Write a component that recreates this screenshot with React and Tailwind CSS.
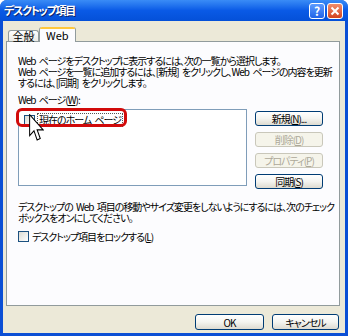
import React from 'react';

function XpButton({ children, disabled, className = '' }) {
    return (
        <div
            className={`flex items-center justify-center rounded-[3px] border ${
                disabled
                    ? 'border-[#c9c7ba] bg-[#f5f4ea] text-[#aca899]'
                    : 'border-[#003c74] bg-gradient-to-b from-[#ffffff] via-[#f4f4f0] to-[#dedbd0] text-black'
            } ${className}`}
        >
            {children}
        </div>
    );
}

function Checkbox() {
    return (
        <div className="h-[11px] w-[11px] shrink-0 border border-[#1c5180] bg-gradient-to-br from-[#dcdcd4] to-[#ffffff]" />
    );
}

export default function App() {
    return (
        <div
            className="flex h-[336px] w-[348px] flex-col overflow-hidden rounded-t-[7px] bg-[#0b4fd5] text-[10px] leading-[11px] tracking-[-1px] text-black [word-spacing:2px]"
            style={{ fontFamily: '"Noto Sans CJK JP", "Liberation Sans", sans-serif', fontFeatureSettings: '"palt"' }}
        >
            {/* title bar */}
            <div className="flex h-[21px] shrink-0 items-center bg-gradient-to-b from-[#3a8cf6] via-[#0a5ae6] to-[#0450d8] pl-[4px] pr-[5px]">
                <span className="text-[11px] font-bold tracking-[-1.3px] text-white [text-shadow:1px_1px_0_#0a246a]">
                    デスクトップ項目
                </span>
                <div className="ml-auto flex gap-[2px] tracking-normal">
                    <div className="flex h-[16px] w-[16px] items-center justify-center rounded-[3px] border border-white bg-gradient-to-b from-[#5d9bff] to-[#1f62e8] text-[12px] font-bold text-white">
                        ?
                    </div>
                    <div className="flex h-[16px] w-[16px] items-center justify-center rounded-[3px] border border-white bg-gradient-to-b from-[#f08d6c] to-[#d2421c]">
                        <svg width="10" height="10" viewBox="0 0 10 10">
                            <path d="M1.5 1.5 L8.5 8.5 M8.5 1.5 L1.5 8.5" stroke="white" strokeWidth="2" />
                        </svg>
                    </div>
                </div>
            </div>

            {/* body */}
            <div className="mx-[3px] mb-[3px] flex flex-1 flex-col bg-[#ece9d8] pl-[3px] pr-[5px] pt-[6px]">
                {/* tabs */}
                <div className="relative z-10 ml-[2px] flex items-end">
                    <div className="flex h-[11px] w-[31px] items-center justify-center rounded-t-[3px] border border-b-0 border-[#919b9c] bg-gradient-to-b from-[#ffffff] to-[#ecebe5] pt-[1px] text-[11px] tracking-normal">
                        全般
                    </div>
                    <div className="-mb-px flex h-[15px] w-[37px] flex-col rounded-t-[3px] border-x border-[#919b9c] bg-[#fcfcfe]">
                        <div className="h-[2px] rounded-t-[3px] bg-[#ffc83c]" />
                        <div className="pl-[6px] pt-[1px] text-[11px] tracking-normal">Web</div>
                    </div>
                </div>

                {/* tab panel */}
                <div className="flex h-[265px] w-[334px] flex-col border border-[#919b9c] bg-[#fcfcfe] pl-[11px] pt-[13px]">
                    <p className="whitespace-nowrap">
                        Web ページをデスクトップに表示するには、次の一覧から選択します。
                        <br />
                        Web ページを一覧に追加するには、[新規] をクリックし、Web ページの内容を更新
                        <br />
                        するには、[同期] をクリックします。
                    </p>

                    <div className="mt-[6px]">
                        Web ページ(<u>W</u>):
                    </div>

                    <div className="mt-[4px] flex">
                        <div className="relative h-[77px] w-[229px] border border-[#7f9db9] bg-white">
                            <div className="flex items-center pl-[5px] pt-[3px]">
                                <Checkbox />
                                <span className="ml-[2px] border border-dotted border-[#555] px-[1px] leading-[12px]">
                                    現在のホーム ページ
                                </span>
                            </div>
                            {/* highlight */}
                            <div className="absolute left-[-3px] top-[-2px] h-[19px] w-[111px] rounded-[6px] border-[3px] border-[#d10a0a]" />
                            {/* cursor */}
                            <svg
                                className="absolute left-[10px] top-[4px]"
                                width="15"
                                height="28"
                                viewBox="0 0 12 20"
                                preserveAspectRatio="none"
                            >
                                <path
                                    d="M0.5 0.5 L0.5 15.5 L4 12 L6.5 18.5 L9 17.5 L6.5 11.3 L11.3 11.3 Z"
                                    fill="white"
                                    stroke="black"
                                    strokeWidth="0.8"
                                />
                            </svg>
                        </div>
                        <div className="ml-[8px] flex w-[68px] flex-col gap-[6px] pt-[2px]">
                            <XpButton className="h-[15px]">
                                新規(<u>N</u>)...
                            </XpButton>
                            <XpButton disabled className="h-[15px]">
                                削除(<u>D</u>)
                            </XpButton>
                            <XpButton disabled className="h-[15px]">
                                プロパティ(<u>P</u>)
                            </XpButton>
                            <XpButton className="h-[15px]">
                                同期(<u>S</u>)
                            </XpButton>
                        </div>
                    </div>

                    <p className="mt-[12px] whitespace-nowrap">
                        デスクトップの Web 項目の移動やサイズ変更をしないようにするには、次のチェック
                        <br />
                        ボックスをオンにしてください。
                    </p>

                    <div className="mt-[8px] flex items-center">
                        <Checkbox />
                        <span className="ml-[3px]">
                            デスクトップ項目をロックする(<u>L</u>)
                        </span>
                    </div>
                </div>

                {/* dialog buttons */}
                <div className="mt-[8px] flex justify-end gap-[8px] pr-[1px]">
                    <XpButton className="h-[16px] w-[69px]">OK</XpButton>
                    <XpButton className="h-[16px] w-[67px]">キャンセル</XpButton>
                </div>
            </div>
        </div>
    );
}
